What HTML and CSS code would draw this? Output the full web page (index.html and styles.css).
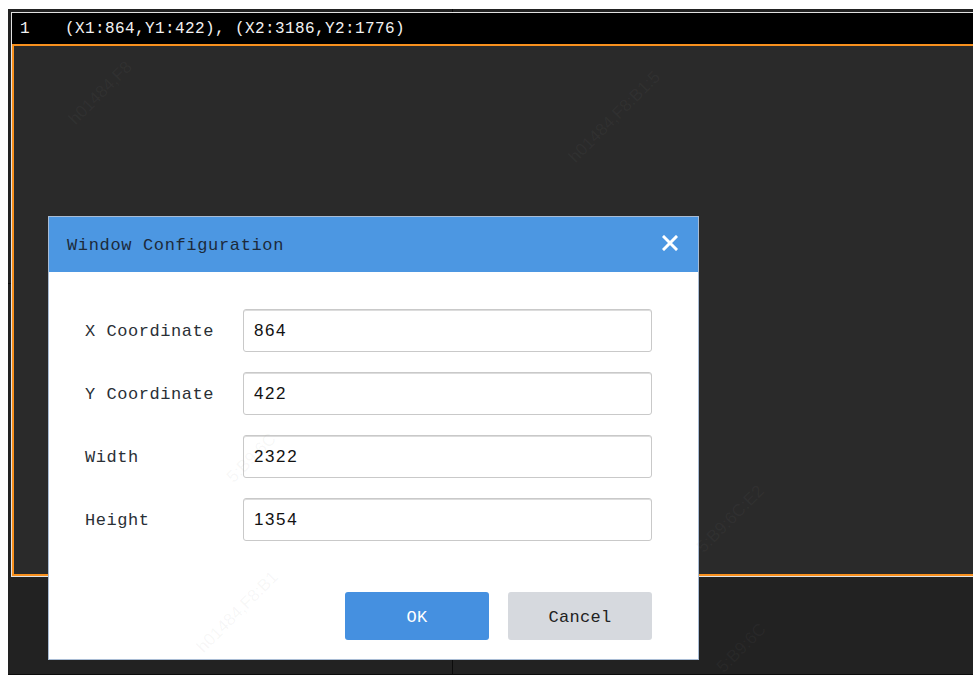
FILE: index.html
```html
<!DOCTYPE html>
<html lang="en">
<head>
<meta charset="utf-8">
<title>Window Configuration</title>
<link rel="stylesheet" href="styles.css">
</head>
<body>
<div class="screen">
  <div class="grid">
    <div class="cell"></div>
    <div class="cell"></div>
    <div class="cell"></div>
    <div class="cell"></div>
  </div>

  <div class="win">
    <div class="win-bar"><span class="win-no">1</span><span class="win-pos">(X1:864,Y1:422), (X2:3186,Y2:1776)</span></div>
    <div class="win-body"></div>
  </div>
</div>

<div class="dialog">
  <div class="dlg-head">
    <span class="dlg-title">Window Configuration</span>
    <svg class="dlg-close" width="16" height="16" viewBox="0 0 16 16"><path d="M2 2L14 14M14 2L2 14" stroke="#fff" stroke-width="3" stroke-linecap="square"/></svg>
  </div>
  <div class="dlg-body">
    <div class="form">
      <label class="lbl">X Coordinate</label><div class="inp">864</div>
      <label class="lbl">Y Coordinate</label><div class="inp">422</div>
      <label class="lbl">Width</label><div class="inp">2322</div>
      <label class="lbl">Height</label><div class="inp">1354</div>
    </div>
    <div class="actions">
      <button class="btn btn-ok">OK</button>
      <button class="btn btn-cancel">Cancel</button>
    </div>
  </div>
</div>

<div class="marks">
  <span class="mk" style="left:72px;top:112px">h01484,F8</span>
  <span class="mk" style="left:572px;top:150px">h01484,F8:B1:5</span>
  <span class="mk" style="left:230px;top:470px">5:B9:6C</span>
  <span class="mk" style="left:700px;top:540px">5:B9:6C:E2</span>
  <span class="mk" style="left:200px;top:640px">h01484,F8:B1</span>
  <span class="mk" style="left:720px;top:660px">5:B9:6C</span>
</div>
</body>
</html>
```

FILE: styles.css
```css
html, body {
  margin: 0;
  padding: 0;
  background: #ffffff;
  overflow: hidden;
  height: 100%;
}

body {
  position: relative;
  width: 973px;
  height: 675px;
}

/* dark video wall canvas */
.screen {
  position: absolute;
  left: 8px;
  top: 9px;
  right: -40px;
  bottom: 0;
  background: #212121;
}

.grid {
  display: grid;
  grid-template-columns: 445px 1fr;
  grid-template-rows: 275px 1fr;
  height: 100%;
}

.cell {
  border-right: 1px solid #0c0c0c;
  border-bottom: 1px solid #0c0c0c;
  background: #222222;
}

/* the opened window on the canvas */
.win {
  position: absolute;
  left: 3px;
  top: 3px;
  width: 1000px;
  height: 563px;
  border: 1px solid #e2e2e2;
  display: flex;
  flex-direction: column;
  background: #000;
}

.win-bar {
  height: 31px;
  flex: none;
  background: #000;
  color: #f2f2f2;
  font-family: "Liberation Mono", "DejaVu Sans Mono", monospace;
  font-size: 16px;
  letter-spacing: 0.4px;
  display: flex;
  align-items: center;
  padding-left: 8px;
  box-sizing: border-box;
  line-height: 1;
}

.win-no {
  width: 45px;
}

.win-body {
  flex: 1;
  border: 2px solid #f7901e;
  background: #2a2a2a;
}

/* modal dialog */
.dialog {
  position: absolute;
  left: 48px;
  top: 216px;
  width: 649px;
  height: 442px;
  border: 1px solid #a9bcd4;
  background: #ffffff;
  display: flex;
  flex-direction: column;
  z-index: 2;
}

.dlg-head {
  height: 55px;
  flex: none;
  background: #4c97e2;
  display: flex;
  align-items: center;
  justify-content: space-between;
  padding: 0 20px 0 18px;
  box-sizing: border-box;
}

.dlg-title {
  font-family: "Liberation Mono", "DejaVu Sans Mono", monospace;
  font-size: 17px;
  letter-spacing: 0.65px;
  color: #1c2a3a;
  margin-top: 1px;
}

.dlg-close {
  margin-top: -3px;
}

.dlg-body {
  flex: 1;
  display: flex;
  flex-direction: column;
  padding: 37px 46px 19px 36px;
}

.form {
  display: grid;
  grid-template-columns: 158px 1fr;
  row-gap: 20px;
  align-items: center;
}

.lbl {
  font-family: "Liberation Mono", "DejaVu Sans Mono", monospace;
  font-size: 17px;
  letter-spacing: 0.55px;
  color: #2a2f36;
  margin-top: 2px;
}

.inp {
  height: 43px;
  box-sizing: border-box;
  border: 1px solid #c9c9c9;
  border-radius: 3px;
  box-shadow: inset 0 1px 0 #dcdcdc;
  padding: 0 10px;
  display: flex;
  align-items: center;
  font-family: "Liberation Sans", Arial, sans-serif;
  font-size: 17px;
  letter-spacing: 1.6px;
  color: #111;
}

.actions {
  margin-top: auto;
  display: flex;
  justify-content: flex-end;
  gap: 19px;
}

.btn {
  width: 144px;
  height: 48px;
  border: none;
  border-radius: 3px;
  font-family: "Liberation Mono", "DejaVu Sans Mono", monospace;
  font-size: 17px;
  letter-spacing: 0.3px;
  padding: 2px 0 0;
  cursor: pointer;
}

.btn-ok {
  background: #4590e0;
  color: #ffffff;
}

.btn-cancel {
  background: #d6d9de;
  color: #222;
}

/* faint diagonal device watermark */
.marks {
  position: absolute;
  inset: 0;
  pointer-events: none;
  z-index: 3;
  overflow: hidden;
}

.mk {
  position: absolute;
  font-family: "Liberation Sans", Arial, sans-serif;
  font-size: 17px;
  color: rgba(140, 140, 140, 0.07);
  transform: rotate(-45deg);
  transform-origin: left center;
  white-space: nowrap;
}
```
